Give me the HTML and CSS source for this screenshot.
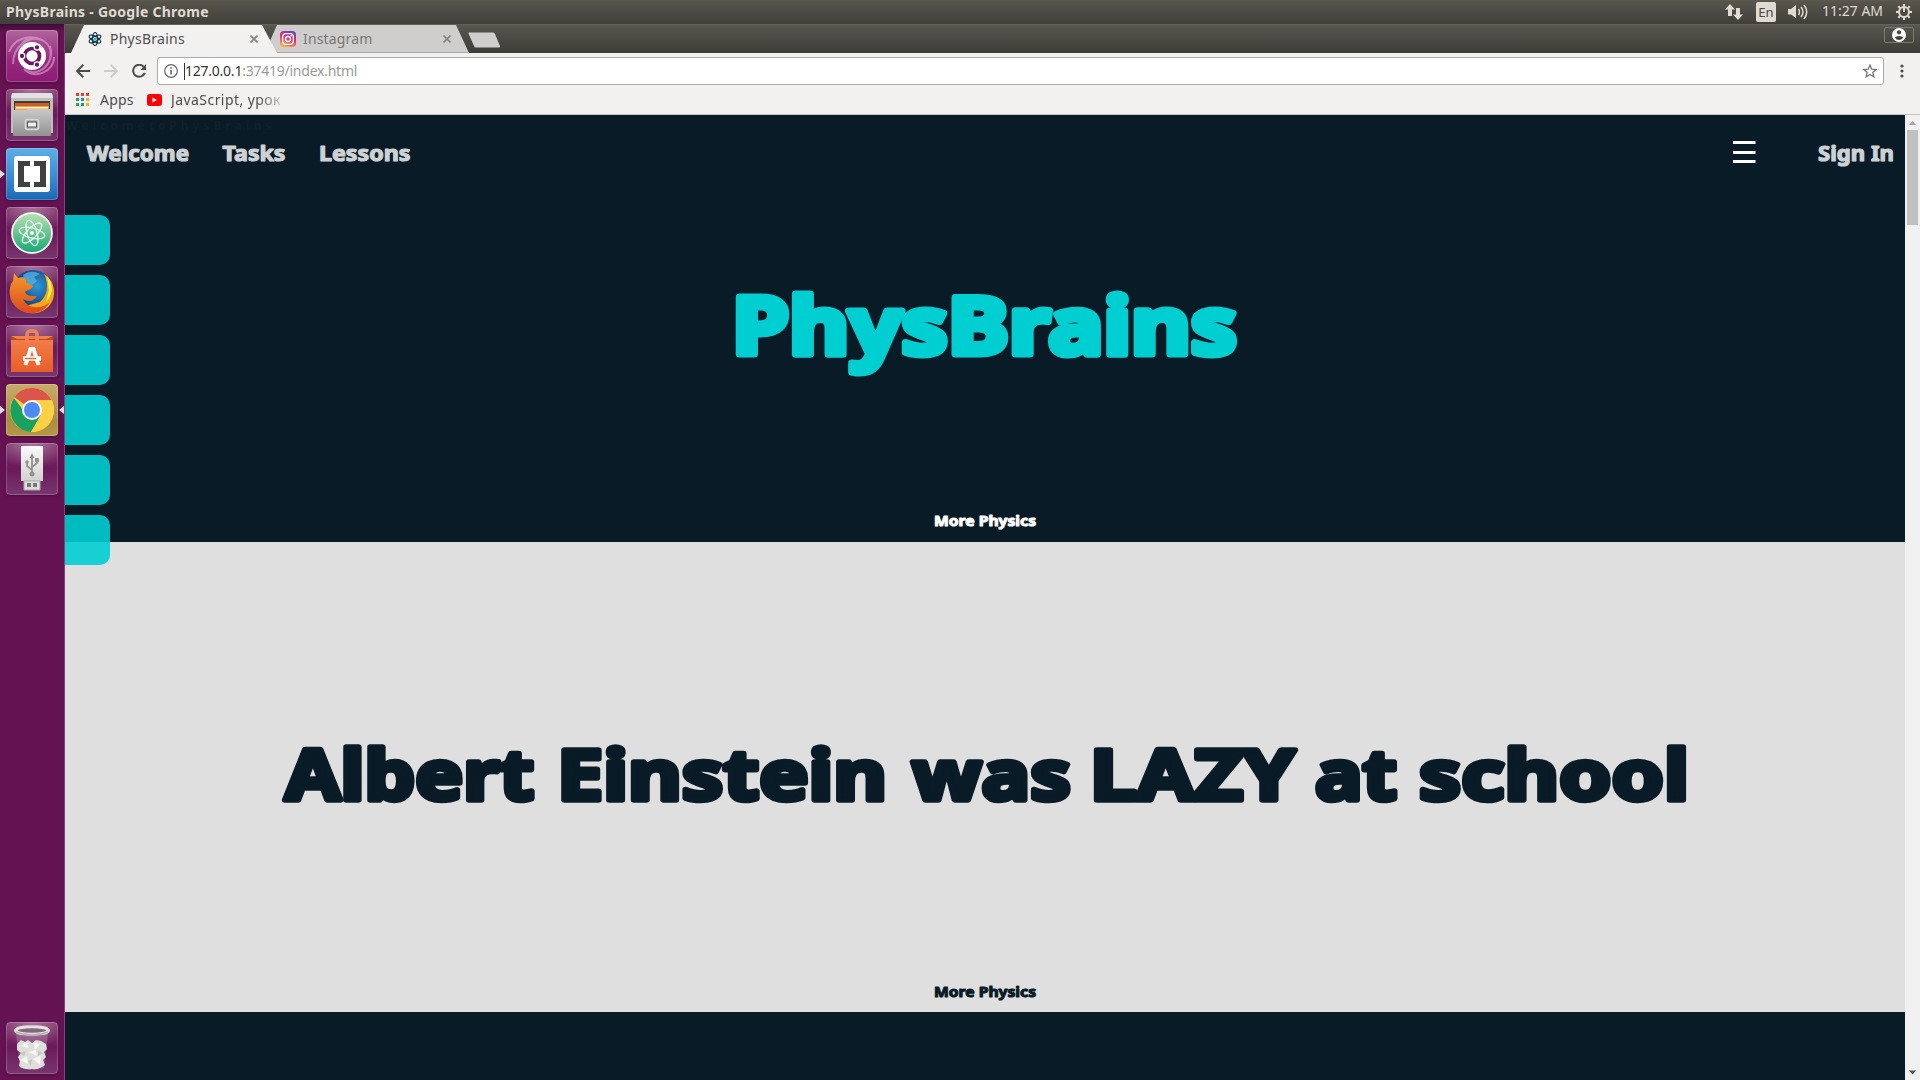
FILE: index.html
```html
<!DOCTYPE html>
<html lang="en">
<head>
<meta charset="utf-8">
<title>PhysBrains</title>
<link rel="stylesheet" href="styles.css">
</head>
<body>
<div class="desktop">
  <header class="panel">
    <div class="panel-title">PhysBrains - Google Chrome</div>
    <div class="indicators">
      <svg class="net" width="18" height="16" viewBox="0 0 18 16"><path d="M5 0L10 5.500H7V12H3V5.500H0ZM13 16L8 10.500H11V4H15V10.500H18Z"/></svg>
      <span class="lang">En</span>
      <svg class="sound" width="20" height="16" viewBox="0 0 20 16"><path d="M0 5H3L8 1V14L3 10.500H0Z"/><path class="wave" d="M10.500 5Q12.500 7.800 10.500 11M13 3Q17 7.800 13 13M16 1Q21.500 7.800 16 15"/></svg>
      <span class="clock">11:27 AM</span>
      <svg class="gear" width="16" height="16" viewBox="0 0 16 16"><circle cx="8" cy="8" r="5" /><path d="M8 0V8M0 8H2.500M13.500 8H16M8 13.500V16M2.300 2.300L4 4M13.700 2.300L12 4M2.300 13.700L4 12M13.700 13.700L12 12"/></svg>
    </div>
  </header>

  <div class="workspace">
    <aside class="launcher">
      <div class="tile ubuntu"><svg width="52" height="52" viewBox="0 0 52 52"><path d="M7 34C7 16 23 5 36 10C25 4 8 8 3 22M44 16C50 34 31 49 18 39C29 51 49 40 48 27M17 12C27 3 48 10 44 28" fill="none" stroke="#e5b0d8" stroke-width="2" opacity=".55"/><circle cx="26" cy="26" r="14" fill="#fff"/><circle cx="26" cy="26" r="7.500" fill="none" stroke="#70145c" stroke-width="3.600"/><g fill="#70145c" stroke="#fff" stroke-width="1.300"><circle cx="16" cy="26" r="2.800"/><circle cx="31" cy="17.300" r="2.800"/><circle cx="31" cy="34.700" r="2.800"/></g></svg></div>
      <div class="tile glass"><svg width="52" height="52" viewBox="0 0 52 52"><path d="M6 4H46L47 10V44H5V10Z" fill="#bfbfbf"/><path d="M6 4H46L47 9H5Z" fill="#e2e2e2"/><path d="M8 12H44V24H8Z" fill="#403c39"/><path d="M9 14H43V23H9Z" fill="#c96022"/><path d="M9 17H43V23H9Z" fill="#f0a04b"/><path d="M10 18H42V19.500H10Z" fill="#fff0cd"/><path d="M7 21H20L22 20H45V47H7Z" fill="url(#metal)"/><rect x="19.500" y="30.500" width="13" height="10" rx="2" fill="#aaa" stroke="#d8d8d8" stroke-width="1.600"/><rect x="21.500" y="33" width="9" height="5" fill="#eee" stroke="#555"/></svg></div>
      <div class="tile brackets running"><svg width="52" height="52" viewBox="0 0 52 52"><rect x="8" y="8" width="36" height="36" rx="3" fill="#fff"/><path d="M12 13H24V18H18V34H24V39H12ZM40 13H28V18H34V34H28V39H40Z" fill="#414141"/></svg></div>
      <div class="tile glass"><svg width="52" height="52" viewBox="0 0 52 52"><circle cx="26" cy="26" r="20" fill="url(#atom)" stroke="#f1f1f1" stroke-width="1.800"/><g fill="none" stroke="#e9fff2" stroke-width="1.300"><ellipse cx="26" cy="26" rx="13" ry="5" transform="rotate(14 26 26)"/><ellipse cx="26" cy="26" rx="13" ry="5" transform="rotate(74 26 26)"/><ellipse cx="26" cy="26" rx="13" ry="5" transform="rotate(134 26 26)"/></g><circle cx="26" cy="26" r="2" fill="#fff"/></svg></div>
      <div class="tile glass"><svg width="52" height="52" viewBox="0 0 52 52"><circle cx="27" cy="24" r="20" fill="url(#globe)"/><path d="M17 9Q25 3 34 8L28 11L31 15L25 20L19 15Z" fill="#5eb8e4" opacity=".7"/><path d="M38 8C51 16 51 34 41 42C33 49 20 49 12 42L34 36C42 29 43 18 38 8Z" fill="#f3a71c"/><path d="M41 10C49 20 46 30 40 36L43 24Z" fill="#fff04c"/><path d="M8 7L12 12C17 10 21 12 20 16L27 20C26 24 21 24 19 26C21 31 27 30 31 30C27 37 20 35 17 33C21 42 33 44 43 37C37 49 21 50 11 42C2 35 2 21 7 15Z" fill="url(#fox)"/></svg></div>
      <div class="tile glass"><svg width="52" height="52" viewBox="0 0 52 52"><path d="M5 11H47V47H5Z" fill="url(#bag)"/><path d="M5 11L11 14H41L47 11V15H5Z" fill="#b74b22"/><path d="M21 17V9Q21 6 26 6Q31 6 31 9V17" fill="none" stroke="#ef8257" stroke-width="3.500"/><path d="M19.500 40L24.500 24H27.500L32.500 40" fill="none" stroke="#fff" stroke-width="4"/><path d="M17 33.500H35" stroke="#fff" stroke-width="4.500"/><path d="M19 33.500H30" stroke="#ed6b35" stroke-width="1.500"/></svg></div>
      <div class="tile chrome running focused"><svg width="52" height="52" viewBox="0 0 52 52"><circle cx="26" cy="26" r="22" fill="#ffcf44"/><path d="M26 26L8.200 13A22 22 0 0 1 45.500 16H26Z" fill="#dc554a"/><path d="M26 26H17L8 14A22 22 0 0 0 25 48L35 31Z" fill="#17a261"/><path d="M26 16H45.500A22 22 0 0 1 25 48L35 31Z" fill="#ffcf44"/><circle cx="26" cy="26" r="10" fill="#fff"/><circle cx="26" cy="26" r="8" fill="#4c8bf5"/></svg></div>
      <div class="tile glass"><svg width="52" height="52" viewBox="0 0 52 52"><path d="M15 3H37V38H15Z" fill="url(#paper)"/><path d="M18 38H34V47H18Z" fill="#ddd" stroke="#aaa"/><path d="M21 40H25V44H21ZM27 40H31V44H27Z" fill="#777"/><g fill="none" stroke="#929292" stroke-width="1.800"><path d="M26 13V30M26 27L21 23V19M26 24L31 20V17"/></g><g fill="#929292"><path d="M26 10L28.500 15H23.500Z"/><circle cx="26" cy="31" r="2.500"/><circle cx="21" cy="19" r="1.800"/><path d="M29 15H33V19H29Z"/></g></svg></div>
      <div class="tile glass trash"><svg width="52" height="52" viewBox="0 0 52 52"><path d="M10 12H42L38 46Q26 49 14 46Z" fill="#eadce8" opacity=".22"/><path d="M11 22L15 18L19 20L22 18L26 21L30 18L35 19L40 22L41 27L38 30L40 35L37 38L39 43Q33 48 26 47Q18 48 13 44L14 39L12 35L15 31L11 28Z" fill="#dededb"/><path d="M15 24L20 20L23 26ZM27 20L34 22L29 28ZM22 30L30 28L31 34ZM14 38L21 34L22 42ZM27 37L35 33L34 43Z" fill="#f6f6f4"/><path d="M14 31L20 29L18 34ZM32 29L37 31L32 34ZM22 39L26 37L25 44Z" fill="#c6c6c2"/><ellipse cx="26" cy="8.500" rx="16.500" ry="3.700" fill="#86667f" stroke="#e3e3df" stroke-width="3"/><path d="M9.500 10Q26 16 42.500 10" fill="none" stroke="#b4b4ae" stroke-width="1.500"/></svg></div>
    </aside>

    <main class="browser">
      <div class="tabstrip">
        <div class="tab active">
          <svg width="14" height="14" viewBox="0 0 14 14" fill="none" stroke="#172d3d" stroke-width="1.100"><ellipse cx="7" cy="7" rx="2.500" ry="6.500"/><ellipse cx="7" cy="7" rx="2.500" ry="6.500" transform="rotate(60 7 7)"/><ellipse cx="7" cy="7" rx="2.500" ry="6.500" transform="rotate(120 7 7)"/><circle cx="7" cy="7" r="1" stroke="#00b6bf"/><path d="M2 2.500L3.500 3M10.500 3L12 2.500M2 11.500L3.500 11M10.500 11L12 11.500" stroke="#19c7cd"/></svg>
          <span class="tab-name">PhysBrains</span>
          <svg class="close" width="8" height="8" viewBox="0 0 8 8"><path d="M.5 .5L7.500 7.500M7.500 .5L.5 7.500"/></svg>
        </div>
        <div class="tab idle">
          <svg width="16" height="16" viewBox="0 0 16 16"><rect width="16" height="16" rx="4" fill="url(#insta)"/><g fill="none" stroke="#fff" stroke-width="1.300"><rect x="2.700" y="2.700" width="10.600" height="10.600" rx="3"/><circle cx="8" cy="8" r="2.500"/></g><circle cx="11.200" cy="4.800" r=".8" fill="#fff"/></svg>
          <span class="tab-name">Instagram</span>
          <svg class="close" width="8" height="8" viewBox="0 0 8 8"><path d="M.5 .5L7.500 7.500M7.500 .5L.5 7.500"/></svg>
        </div>
        <svg class="newtab" width="33" height="16" viewBox="0 0 33 16"><path d="M1 .5H25Q26.500 .5 27 2L32 14Q32.300 15.500 31 15.500H8Q6.500 15.500 6 14L.7 2Q0 .5 1 .5Z"/></svg>
        <div class="profile"><svg width="14" height="14" viewBox="0 0 14 14"><circle cx="7" cy="7" r="7" fill="#fff"/><circle cx="7" cy="4.300" r="2.100" fill="#45443f"/><path d="M2.800 9.700Q4 8 7 8T11.200 9.700Q9.500 12 7 12T2.800 9.700Z" fill="#45443f"/></svg></div>
      </div>

      <div class="toolbar">
        <svg class="nav-icon" width="14" height="14" viewBox="0 0 14 14"><path d="M14 7H1.500M7.300 .8L1.200 7L7.300 13.200"/></svg>
        <svg class="nav-icon off" width="14" height="14" viewBox="0 0 14 14"><path d="M0 7H12.500M6.700 .8L12.800 7L6.700 13.200"/></svg>
        <svg class="nav-icon" width="15" height="14" viewBox="0 0 15 14"><path d="M12 3.200A6 6 0 1 0 12.800 8.800"/><path class="head" d="M14 0V6H8.500Z"/></svg>
        <div class="omnibox">
          <svg width="14" height="14" viewBox="0 0 14 14" fill="none" stroke="#666" stroke-width="1.200"><circle cx="7" cy="7" r="6.300"/><path d="M7 6V10.500M7 3.300V4.800" stroke-width="1.600"/></svg>
          <span class="caret"></span><span class="url"><b>127.0.0.1</b>:37419/index.html</span>
          <svg class="star" width="14" height="14" viewBox="0 0 14 14"><path d="M7 1L8.700 5.200L13.200 5.500L9.800 8.400L10.900 12.900L7 10.500L3.100 12.900L4.200 8.400L.8 5.500L5.300 5.200Z"/></svg>
        </div>
        <svg class="menu" width="4" height="14" viewBox="0 0 4 14"><circle cx="2" cy="2" r="1.600"/><circle cx="2" cy="7" r="1.600"/><circle cx="2" cy="12" r="1.600"/></svg>
      </div>

      <div class="bookmarks">
        <svg width="13" height="13" viewBox="0 0 13 13"><path d="M0 0H3V3H0ZM5 0H8V3H5ZM10 0H13V3H10Z" fill="#ec3a34"/><path d="M0 5H3V8H0ZM0 10H3V13H0ZM5 10H8V13H5Z" fill="#2b9f55"/><path d="M5 5H8V8H5Z" fill="#1e88e5"/><path d="M10 5H13V8H10ZM10 10H13V13H10Z" fill="#f2b02b"/></svg>
        <span class="apps">Apps</span>
        <svg width="15" height="12" viewBox="0 0 15 12"><rect width="15" height="12" rx="3" fill="#f00"/><path d="M5.500 3.500L10 6L5.500 8.500Z" fill="#fff"/></svg>
        <span class="saved">JavaScript, урок</span>
      </div>

      <div class="viewport">
        <div class="site">
          <section class="hero">
            <div class="marquee">WelcometoPhysBrains</div>
            <nav class="menu-row">
              <svg width="1840" height="48" viewBox="65 130 1840 48" class="round nav-text">
                <text x="87" y="161.200" textLength="102" lengthAdjust="spacingAndGlyphs">Welcome</text>
                <text x="222.500" y="161.200" textLength="63" lengthAdjust="spacingAndGlyphs">Tasks</text>
                <text x="319" y="161.200" textLength="91.500" lengthAdjust="spacingAndGlyphs">Lessons</text>
                <path class="bars" d="M1733 142.500H1755.500M1733 152.500H1755.500M1733 161.500H1755.500"/>
                <text x="1818" y="161.200" textLength="76" lengthAdjust="spacingAndGlyphs">Sign In</text>
              </svg>
            </nav>
            <h1 class="title">
              <svg width="540" height="150" viewBox="715 260 540 150" class="round brand"><text x="732" y="353.800" textLength="505" lengthAdjust="spacingAndGlyphs">PhysBrains</text></svg>
            </h1>
            <div class="more">
              <svg width="120" height="24" viewBox="925 508 120 24" class="round small"><text x="934" y="526.200" textLength="102" lengthAdjust="spacingAndGlyphs">More Physics</text></svg>
            </div>
          </section>
          <section class="fact">
            <h2 class="title">
              <svg width="1440" height="140" viewBox="265 705 1440 140" class="round quote"><text y="800.300"><tspan x="285" textLength="249" lengthAdjust="spacingAndGlyphs">Albert</tspan> <tspan x="557" textLength="330" lengthAdjust="spacingAndGlyphs">Einstein</tspan> <tspan x="912" textLength="159" lengthAdjust="spacingAndGlyphs">was</tspan> <tspan x="1090" textLength="205" lengthAdjust="spacingAndGlyphs">LAZY</tspan> <tspan x="1315" textLength="82" lengthAdjust="spacingAndGlyphs">at</tspan> <tspan x="1419" textLength="270" lengthAdjust="spacingAndGlyphs">school</tspan></text></svg>
            </h2>
            <div class="more">
              <svg width="120" height="24" viewBox="925 508 120 24" class="round small"><text x="934" y="526.200" textLength="102" lengthAdjust="spacingAndGlyphs">More Physics</text></svg>
            </div>
          </section>
          <div class="side-tabs"><i></i><i></i><i></i><i></i><i></i><i></i></div>
        </div>
        <div class="scrollbar">
          <svg width="15" height="15" viewBox="0 0 15 15"><path d="M4 10H11L7.500 6Z" fill="#a3a3a3"/></svg>
          <div class="thumb"></div>
          <svg width="15" height="15" viewBox="0 0 15 15"><path d="M4 5.500H11L7.500 9.500Z" fill="#505050"/></svg>
        </div>
      </div>
    </main>
  </div>
</div>

<svg class="defs" width="0" height="0">
  <linearGradient id="metal" x2="0" y2="1"><stop stop-color="#c9c9c9"/><stop offset="1" stop-color="#929292"/></linearGradient>
  <linearGradient id="atom" x2="0" y2="1"><stop stop-color="#b8e2b0"/><stop offset="1" stop-color="#16a873"/></linearGradient>
  <radialGradient id="globe" cx=".6" cy=".4"><stop stop-color="#2b9ad5"/><stop offset="1" stop-color="#164787"/></radialGradient>
  <linearGradient id="fox" x2="0" y2="1"><stop stop-color="#f39a2c"/><stop offset="1" stop-color="#dc4a1c"/></linearGradient>
  <linearGradient id="bag" x2="0" y2="1"><stop stop-color="#f2804c"/><stop offset="1" stop-color="#ea5e28"/></linearGradient>
  <linearGradient id="paper" x2="0" y2="1"><stop stop-color="#fafafa"/><stop offset="1" stop-color="#d2d2d2"/></linearGradient>
  <linearGradient id="insta" x1=".7" y1="0" x2=".3" y2="1"><stop stop-color="#6a3fc4"/><stop offset=".45" stop-color="#e02c78"/><stop offset="1" stop-color="#fbb040"/></linearGradient>
</svg>
</body>
</html>
```
FILE: styles.css
```css
* { box-sizing: border-box; }
body { margin: 0; overflow: hidden; font-family: "Noto Sans", "Open Sans", sans-serif; }
svg { display: block; flex: none; }
.defs { position: absolute; }
.desktop { display: flex; flex-direction: column; width: 1920px; height: 1080px; }

.panel { height: 24px; flex: none; display: flex; align-items: center; justify-content: space-between; padding: 0 8px 0 6px; background: linear-gradient(#5d5a4e 0, #57544c 2px, #403f3a 100%); color: #dfdbd2; }
.panel-title { font-size: 14px; font-weight: 700; letter-spacing: .26px; line-height: 24px; }
.indicators { display: flex; align-items: center; fill: #dfdbd2; }
.lang { width: 20px; height: 20px; margin: 0 12px 0 13px; border-radius: 2px; background: #dfdbd2; color: #474640; font-size: 13px; line-height: 21px; text-align: center; }
.wave { fill: none; stroke: #dfdbd2; stroke-width: 1.5; }
.clock { width: 62px; margin: 0 12px 0 14px; font-size: 14px; line-height: 22px; padding-bottom: 2px; white-space: nowrap; }
.gear { fill: none; stroke: #dfdbd2; stroke-width: 2; }

.workspace { flex: 1; display: flex; min-height: 0; }
.launcher { width: 65px; display: flex; flex-direction: column; gap: 7px; padding: 6px 6px; background: linear-gradient(#3d0c35, #651253 8px); border-right: 1px solid #87417a; }
.tile { position: relative; width: 52px; height: 52px; flex: none; border-radius: 4px; box-shadow: inset 0 0 0 1px rgba(255,255,255,.2), 0 1px 3px rgba(0,0,0,.3); }
.glass { background: radial-gradient(ellipse 40px 25px at 50% 0, rgba(255,255,255,.38), rgba(255,255,255,.03)), linear-gradient(#75235f, #661255 50%, #75306a); }
.ubuntu { background: linear-gradient(#b0659d, #95277d 60%, #8d1d74); }
.brackets { background: linear-gradient(#5cb0e4, #3789d0 60%, #1b67b4); }
.chrome { background: linear-gradient(#c7ad69, #a98d42 70%, #b49947); }
.trash { margin-top: auto; }
.running::before { content: ""; position: absolute; left: -6px; top: 22px; border: 4px solid transparent; border-left: 5px solid #ddd; border-right: 0; }
.focused::after { content: ""; position: absolute; right: -6px; top: 22px; border: 4px solid transparent; border-right: 5px solid #ddd; border-left: 0; }

.browser { flex: 1; min-width: 0; display: flex; flex-direction: column; background: #f2f1f0; }
.tabstrip { height: 29px; flex: none; display: flex; padding: 1px 6px 0; background: linear-gradient(#68655a 0, #57554d 2px, #3d3c38 100%); color: #505050; font-size: 14px; }
.tab { display: flex; align-items: center; height: 28px; }
.active { width: 206px; padding: 0 19px 1px 17px; background: #f2f1f0; clip-path: polygon(13px 0, 191px 0, 206px 100%, 0 100%); z-index: 1; }
.idle { width: 200px; margin-left: -7px; padding: 0 19px 0 10px; background: #cfcecc; border-bottom: 1px solid #aaa; color: #777; clip-path: polygon(7px 0, 186px 0, 199px 100%, 5px 100%, 0 16px); }
.tab-name { margin-left: 7px; flex: 1; letter-spacing: .15px; }
.active .tab-name { margin-left: 8px; letter-spacing: .25px; }
.close { fill: none; stroke: #858585; stroke-width: 1.7; }
.newtab { margin: 7px 0 0 -2px; fill: #cfcecc; }
.profile { width: 30px; height: 16px; margin: 2px 0 0 auto; display: grid; place-items: center; border: 1px solid #7c7a73; border-radius: 2px; }

.toolbar { height: 36px; flex: none; display: flex; align-items: center; gap: 14px; padding: 0 16px 0 11px; }
.nav-icon { fill: none; stroke: #4d4d4d; stroke-width: 2; }
.nav-icon.off { stroke: #ccc; }
.nav-icon .head { fill: #4d4d4d; stroke: none; }
.omnibox { flex: 1; height: 28px; margin: 0 2px 0 -5px; display: flex; align-items: center; padding: 0 6px; background: #fff; border: 1px solid #aaa; border-radius: 3px; font-size: 14px; color: #999; }
.nav-icon:nth-child(3) { margin-right: 1px; }
.caret { width: 1px; height: 17px; margin-left: 6px; background: #333; }
.url { flex: 1; letter-spacing: -.24px; padding-bottom: 2px; }
.url b { font-weight: 400; color: #333; }
.star { fill: none; stroke: #777; stroke-width: 1.3; }
.menu { fill: #4d4d4d; }
.bookmarks { height: 26px; flex: none; display: flex; align-items: center; padding: 0 11px 4px; border-bottom: 1px solid #c5c5c4; color: #4c4c4c; font-size: 14px; }
.apps { width: 34px; margin: 0 13px 0 11px; white-space: nowrap; letter-spacing: .2px; }
.saved { width: 114px; margin-left: 9px; overflow: hidden; white-space: nowrap; letter-spacing: .43px; -webkit-mask-image: linear-gradient(90deg, #000 77%, rgba(0,0,0,.1)); mask-image: linear-gradient(90deg, #000 77%, rgba(0,0,0,.1)); }

.viewport { flex: 1; min-height: 0; display: flex; }
.site { position: relative; width: 1840px; background: #091b26; }
.hero { height: 427px; display: flex; flex-direction: column; }
.marquee { height: 15px; padding: 3px 0 0 1px; color: #111f28; font-size: 12px; font-weight: 700; letter-spacing: 4px; line-height: 16px; }
.hero .title { margin: 82px 0 0 650px; }
.title { margin: 0; }
.more { margin: auto 0 10px 860px; }
.fact { height: 470px; display: flex; flex-direction: column; background: #dfdfdf; }
.fact .title { margin: 163px 0 0 200px; }
.fact .more { margin-bottom: 9px; }
.round { font-family: "Noto Sans", "Open Sans", sans-serif; font-weight: 700; stroke-linejoin: round; }
.nav-text { font-size: 21px; fill: #cdd1d4; stroke: #cdd1d4; stroke-width: 1.2; }
.bars { fill: none; stroke: #fff; stroke-width: 3; }
.brand { font-size: 79px; fill: #00ced1; stroke: #00ced1; stroke-width: 7; }
.quote { font-size: 70px; fill: #091b26; stroke: #091b26; stroke-width: 5.5; }
.small { font-size: 15px; fill: #fff; stroke: #fff; stroke-width: 1.1; }
.fact .small { fill: #091b26; stroke: #091b26; }
.side-tabs { position: absolute; left: 0; top: 100px; display: flex; flex-direction: column; gap: 10px; }
.side-tabs i { width: 45px; height: 50px; border-radius: 0 10px 10px 0; background: rgba(0,206,209,.9); }
.scrollbar { width: 15px; display: flex; flex-direction: column; background: #f1f1f1; }
.thumb { width: 11px; height: 95px; margin: 0 auto auto 2px; background: #c1c1c1; }
```
